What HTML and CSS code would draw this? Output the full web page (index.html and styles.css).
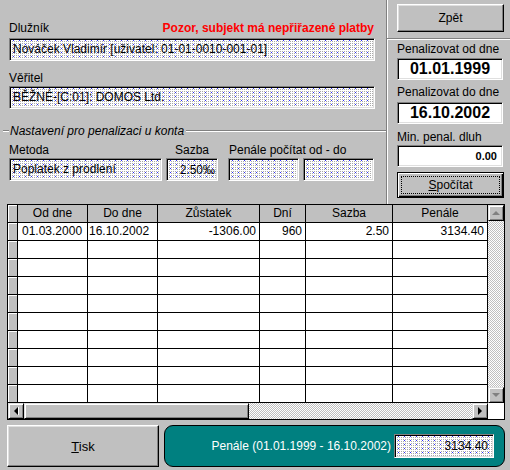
FILE: index.html
```html
<!DOCTYPE html>
<html lang="cs">
<head>
<meta charset="utf-8">
<title>Penalizace</title>
<link rel="stylesheet" href="styles.css">
</head>
<body>
<div class="window">
  <div class="top">
    <div class="left">
      <div class="party">
        <div class="label-row"><span>Dlužník</span><span class="warn">Pozor, subjekt má nepřiřazené platby</span></div>
        <div class="field wide">Nováček Vladimír [uživatel: 01-01-0010-001-01]</div>
        <div class="label creditor">Věřitel</div>
        <div class="field wide second">BĚŽNÉ-[C:01]: DOMOS Ltd.</div>
      </div>
      <div class="group">
        <div class="legend"><span class="legend-line short"></span><span class="legend-text">Nastavení pro penalizaci u konta</span><span class="legend-line long"></span></div>
        <div class="settings">
          <div class="col method">
            <div class="label">Metoda</div>
            <div class="field">Poplatek z prodlení</div>
          </div>
          <div class="col rate">
            <div class="label center">Sazba</div>
            <div class="field rate-field"><span class="rate-value">2.50‰</span></div>
          </div>
          <div class="col range">
            <div class="label">Penále počítat od - do</div>
            <div class="range-fields">
              <div class="field date"></div>
              <div class="field date"></div>
            </div>
          </div>
        </div>
      </div>
    </div>
    <div class="right">
      <div class="btn back">Zpět</div>
      <div class="hline"></div>
      <div class="rlabel l1">Penalizovat od dne</div>
      <div class="box big b1">01.01.1999</div>
      <div class="rlabel l2">Penalizovat do dne</div>
      <div class="box big b2">16.10.2002</div>
      <div class="rlabel l3">Min. penal. dluh</div>
      <div class="box small b3">0.00</div>
      <div class="btn default"><span class="focus"><u>S</u>počítat</span></div>
    </div>
  </div>

  <div class="grid">
    <div class="table">
      <div class="row head">
        <div class="c ind"></div>
        <div class="c c1 ctr">Od dne</div>
        <div class="c c2 ctr">Do dne</div>
        <div class="c c3 ctr">Zůstatek</div>
        <div class="c c4 ctr">Dní</div>
        <div class="c c5 ctr">Sazba</div>
        <div class="c c6 ctr">Penále</div>
      </div>
      <div class="row">
        <div class="c ind"></div>
        <div class="c c1 pl4">01.03.2000</div>
        <div class="c c2 pl1">16.10.2002</div>
        <div class="c c3 num">-1306.00</div>
        <div class="c c4 num">960</div>
        <div class="c c5 num">2.50</div>
        <div class="c c6 num">3134.40</div>
      </div>
      <div class="row"><div class="c ind"></div><div class="c c1"></div><div class="c c2"></div><div class="c c3"></div><div class="c c4"></div><div class="c c5"></div><div class="c c6"></div></div>
      <div class="row"><div class="c ind"></div><div class="c c1"></div><div class="c c2"></div><div class="c c3"></div><div class="c c4"></div><div class="c c5"></div><div class="c c6"></div></div>
      <div class="row"><div class="c ind"></div><div class="c c1"></div><div class="c c2"></div><div class="c c3"></div><div class="c c4"></div><div class="c c5"></div><div class="c c6"></div></div>
      <div class="row"><div class="c ind"></div><div class="c c1"></div><div class="c c2"></div><div class="c c3"></div><div class="c c4"></div><div class="c c5"></div><div class="c c6"></div></div>
      <div class="row"><div class="c ind"></div><div class="c c1"></div><div class="c c2"></div><div class="c c3"></div><div class="c c4"></div><div class="c c5"></div><div class="c c6"></div></div>
      <div class="row"><div class="c ind"></div><div class="c c1"></div><div class="c c2"></div><div class="c c3"></div><div class="c c4"></div><div class="c c5"></div><div class="c c6"></div></div>
      <div class="row"><div class="c ind"></div><div class="c c1"></div><div class="c c2"></div><div class="c c3"></div><div class="c c4"></div><div class="c c5"></div><div class="c c6"></div></div>
      <div class="row"><div class="c ind"></div><div class="c c1"></div><div class="c c2"></div><div class="c c3"></div><div class="c c4"></div><div class="c c5"></div><div class="c c6"></div></div>
      <div class="row"><div class="c ind"></div><div class="c c1"></div><div class="c c2"></div><div class="c c3"></div><div class="c c4"></div><div class="c c5"></div><div class="c c6"></div></div>
    </div>
    <div class="vscroll">
      <div class="sbtn"><span class="arrow up"></span></div>
      <div class="track"></div>
      <div class="sbtn"><span class="arrow down"></span></div>
    </div>
    <div class="hscroll">
      <div class="sbtn"><span class="arrow left"></span></div>
      <div class="thumb"></div>
      <div class="track"></div>
      <div class="sbtn"><span class="arrow rightarrow"></span></div>
    </div>
    <div class="corner"></div>
  </div>

  <div class="bottom">
    <div class="btn tisk"><span><u>T</u>isk</span></div>
    <div class="teal">
      <span class="teal-text">Penále (01.01.1999 - 16.10.2002)</span>
      <div class="field total">3134.40</div>
    </div>
  </div>
</div>
</body>
</html>
```

FILE: styles.css
```css
html, body {
  margin: 0;
  padding: 0;
  background: #c0c0c0;
}

body {
  font-family: "Liberation Sans", Arial, sans-serif;
  font-size: 12px;
  color: #000;
}

.window {
  width: 510px;
  height: 470px;
  overflow: hidden;
}

/* ---------- top area ---------- */
.top {
  display: flex;
  height: 204px;
}

.left {
  width: 386px;
  border-right: 1px solid #808080;
  box-shadow: 1px 0 0 #fff;
}

.party {
  padding: 21px 0 0 9px;
}

.label-row {
  display: flex;
  justify-content: space-between;
  width: 365px;
  height: 14px;
  line-height: 14px;
}

.warn {
  color: #ff0000;
  font-weight: bold;
}

.label {
  height: 14px;
  line-height: 14px;
  white-space: nowrap;
}

.label.center {
  text-align: center;
}

.creditor {
  margin-top: 10px;
}

.field {
  box-sizing: border-box;
  height: 23px;
  line-height: 21px;
  padding: 0 3px;
  white-space: nowrap;
  overflow: hidden;
  border: 1px solid;
  border-color: #808080 #fff #fff #808080;
  box-shadow: inset 1px 1px 0 #000, inset -1px -1px 0 #dfdfdf;
  background-color: #fff;
  background-image:
    conic-gradient(from 270deg at 1px 1px, #3030ff 25%, transparent 0),
    conic-gradient(from 270deg at 1px 1px, #a8a8a8 25%, transparent 0);
  background-size: 6px 4px, 2px 2px;
  background-position: 3px 1px, 0 0;
}

.field.wide {
  width: 366px;
  margin-top: 3px;
}

.field.second {
  margin-top: 1px;
}

/* group */
.group {
  margin-top: 15px;
  padding-left: 3px;
}

.legend {
  display: flex;
  align-items: center;
  height: 14px;
}

.legend-line {
  height: 0;
  border-top: 1px solid #808080;
  border-bottom: 1px solid #fff;
}

.legend-line.short {
  width: 6px;
}

.legend-line.long {
  flex: 1;
}

.legend-text {
  font-style: italic;
  line-height: 14px;
  padding: 0 2px 0 1px;
  white-space: nowrap;
}

.settings {
  display: flex;
  padding-left: 6px;
  margin-top: 5px;
}

.col {
  flex: none;
}

.col .field {
  margin-top: 1px;
}

.method {
  width: 153px;
}

.rate {
  width: 52px;
  margin-left: 4px;
}

.field.rate-field {
  width: 52px;
  display: flex;
  justify-content: flex-end;
  align-items: center;
  padding: 0 2px 0 0;
  line-height: 14px;
}

.rate-value {
  display: block;
  color: #000;
}

.range {
  margin-left: 10px;
}

.range .label {
  padding-left: 1px;
}

.range-fields {
  display: flex;
  gap: 4px;
}

.field.date {
  width: 71px;
}

/* right panel */
.right {
  width: 123px;
}

.btn {
  box-sizing: border-box;
  background: #c0c0c0;
  border: 1px solid;
  border-color: #fff #000 #000 #fff;
  box-shadow: inset -1px -1px 0 #808080, inset 1px 1px 0 #dfdfdf;
  display: flex;
  align-items: center;
  justify-content: center;
  white-space: nowrap;
}

.back {
  width: 107px;
  height: 28px;
  margin: 4px 0 0 10px;
}

.hline {
  height: 0;
  border-top: 1px solid #808080;
  border-bottom: 1px solid #fff;
  margin-top: 6px;
}

.rlabel {
  height: 14px;
  line-height: 14px;
  margin-left: 10px;
  white-space: nowrap;
}

.l1 { margin-top: 2px; }
.l2 { margin-top: 5px; }
.l3 { margin-top: 6px; }

.box {
  box-sizing: border-box;
  width: 106px;
  height: 22px;
  margin-left: 10px;
  background: #fff;
  border: 1px solid;
  border-color: #808080 #fff #fff #808080;
  box-shadow: inset 1px 1px 0 #000, inset -1px -1px 0 #dfdfdf;
  font-weight: bold;
}

.box.big {
  font-size: 16px;
  line-height: 20px;
  text-align: center;
}

.b1 { margin-top: 2px; }
.b2 { margin-top: 3px; }
.b3 { margin-top: 1px; }

.box.small {
  font-size: 11px;
  line-height: 20px;
  text-align: right;
  padding-right: 5px;
}

.btn.default {
  width: 107px;
  height: 26px;
  margin: 5px 0 0 10px;
  border: 1px solid #000;
  box-shadow: inset 1px 1px 0 #fff, inset -1px -1px 0 #000, inset -2px -2px 0 #808080;
  padding: 3px;
  align-items: stretch;
}

.focus {
  flex: 1;
  border: 1px dotted #000;
  display: flex;
  align-items: center;
  justify-content: center;
}

/* ---------- grid ---------- */
.grid {
  box-sizing: border-box;
  margin-left: 7px;
  width: 498px;
  height: 216px;
  border: 1px solid #000;
  display: grid;
  grid-template-columns: 480px 16px;
  grid-template-rows: 198px 16px;
}

.table {
  display: flex;
  flex-direction: column;
}

.row {
  display: flex;
  height: 18px;
}

.c {
  box-sizing: border-box;
  height: 18px;
  border-right: 1px solid #000;
  border-bottom: 1px solid #000;
  line-height: 17px;
  white-space: nowrap;
  overflow: hidden;
  background: #fff;
}

.head .c {
  background: #c0c0c0;
}

.c.ind {
  width: 10px;
  background: #c0c0c0;
  box-shadow: inset 1px 1px 0 #fff;
}

.c1 { width: 70px; }
.c2 { width: 70px; }
.c3 { width: 102px; }
.c4 { width: 46px; }
.c5 { width: 87px; }
.c6 { width: 95px; }

.ctr { text-align: center; }
.num { text-align: right; padding-right: 3px; }
.pl4 { padding-left: 4px; }
.pl1 { padding-left: 1px; }

.track {
  background: repeating-conic-gradient(#c0c0c0 0 25%, #fff 0 50%) 0 0 / 2px 2px;
}

.vscroll {
  display: flex;
  flex-direction: column;
}

.vscroll .track {
  flex: 1;
}

.hscroll {
  display: flex;
}

.hscroll .track {
  flex: 1;
}

.sbtn {
  box-sizing: border-box;
  width: 16px;
  height: 16px;
  flex: none;
  background: #c0c0c0;
  border: 1px solid;
  border-color: #dfdfdf #000 #000 #dfdfdf;
  box-shadow: inset 1px 1px 0 #fff, inset -1px -1px 0 #808080;
  display: flex;
  align-items: center;
  justify-content: center;
}

.thumb {
  box-sizing: border-box;
  width: 225px;
  height: 16px;
  background: #c0c0c0;
  border: 1px solid;
  border-color: #dfdfdf #000 #000 #dfdfdf;
  box-shadow: inset 1px 1px 0 #fff, inset -1px -1px 0 #808080;
}

.arrow {
  width: 0;
  height: 0;
  border: 0 solid transparent;
}

.arrow.up {
  border-width: 0 4px 4px 4px;
  border-bottom-color: #808080;
}

.arrow.down {
  border-width: 4px 4px 0 4px;
  border-top-color: #808080;
}

.arrow.left {
  border-width: 4px 4px 4px 0;
  border-right-color: #000;
}

.arrow.rightarrow {
  border-width: 4px 0 4px 4px;
  border-left-color: #000;
}

.corner {
  background: #fff;
}

/* ---------- bottom ---------- */
.bottom {
  display: flex;
  gap: 5px;
  margin-top: 5px;
  padding-left: 7px;
}

.tisk {
  width: 152px;
  height: 42px;
  font-size: 13px;
}

.teal {
  box-sizing: border-box;
  width: 341px;
  height: 42px;
  border: 1px solid #000;
  border-radius: 9px;
  background: #008080;
  display: flex;
  align-items: center;
  justify-content: flex-end;
  gap: 3px;
  padding-right: 10px;
}

.teal-text {
  color: #fff;
  white-space: nowrap;
}

.field.total {
  width: 100px;
  height: 24px;
  line-height: 22px;
  padding-right: 5px;
  text-align: right;
}
```
